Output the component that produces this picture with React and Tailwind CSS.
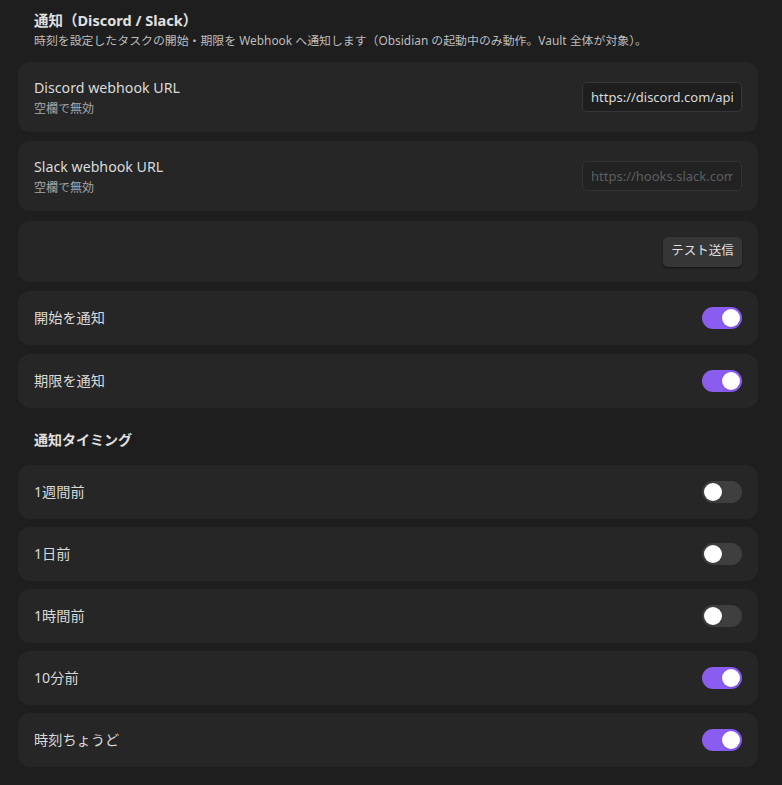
import React, { useState } from "react";

function Toggle({ on, onClick }) {
  return (
    <button
      onClick={onClick}
      className={`relative flex h-[22px] w-[40px] shrink-0 items-center rounded-full px-[2px] ${
        on ? "justify-end bg-[#8a5cf0]" : "justify-start bg-[#3f3f3f]"
      }`}
    >
      <span className="block h-[18px] w-[18px] rounded-full bg-white shadow" />
    </button>
  );
}

function Row({ title, desc, children, h = "h-[54px]" }) {
  return (
    <div className={`flex ${h} items-center justify-between rounded-[12px] bg-[#262626] px-4`}>
      <div className="flex flex-col">
        {title && <div className="text-[14.2px] leading-5 text-[#dadada]">{title}</div>}
        {desc && <div className="mt-[3px] text-[12px] leading-4 text-[#a8a8a8]">{desc}</div>}
      </div>
      {children}
    </div>
  );
}

export default function App() {
  const [flags, setFlags] = useState({
    start: true,
    due: true,
    week: false,
    day: false,
    hour: false,
    min10: true,
    exact: true,
  });
  const flip = (k) => setFlags((f) => ({ ...f, [k]: !f[k] }));

  const timings = [
    ["week", "1週間前"],
    ["day", "1日前"],
    ["hour", "1時間前"],
    ["min10", "10分前"],
    ["exact", "時刻ちょうど"],
  ];

  return (
    <div
      className="min-h-[785px] bg-[#1e1e1e] pl-[18px] pr-[24px] pt-[10px]"
      style={{ fontFamily: '"Noto Sans", "Noto Sans CJK JP", sans-serif' }}
    >
      <div className="px-4">
        <div className="text-[14.5px] font-bold leading-5 text-[#e0e0e0]">通知（Discord / Slack）</div>
        <div className="text-[11.9px] leading-5 text-[#bdbdbd]">
          時刻を設定したタスクの開始・期限を Webhook へ通知します（Obsidian の起動中のみ動作。Vault 全体が対象）。
        </div>
      </div>

      <div className="mt-[12px] flex flex-col gap-[9px]">
        <Row title="Discord webhook URL" desc="空欄で無効" h="h-[70px]">
          <input
            className="h-[30px] w-[160px] rounded-[5px] border border-[#363636] bg-[#1e1e1e] px-2 text-[13px] text-[#dadada] outline-none"
            defaultValue="https://discord.com/api/webhooks/"
          />
        </Row>
        <Row title="Slack webhook URL" desc="空欄で無効" h="h-[70px]">
          <input
            className="h-[30px] w-[160px] rounded-[5px] border border-[#333333] bg-[#222222] px-2 text-[13px] text-[#dadada] outline-none placeholder:text-[#5e5e5e]"
            placeholder="https://hooks.slack.com/services/"
          />
        </Row>
        <div className="mt-px">
          <Row h="h-[61px]">
            <button className="h-[30px] w-[79px] rounded-[5px] bg-[#363636] text-[12.5px] text-[#e0e0e0] shadow-[0_1px_2px_rgba(0,0,0,0.5)]">
              テスト送信
            </button>
          </Row>
        </div>
        <Row title="開始を通知">
          <Toggle on={flags.start} onClick={() => flip("start")} />
        </Row>
        <Row title="期限を通知">
          <Toggle on={flags.due} onClick={() => flip("due")} />
        </Row>
      </div>

      <div className="px-4 pb-[15px] pt-[22px] text-[14px] font-bold leading-5 text-[#e0e0e0]">通知タイミング</div>

      <div className="flex flex-col gap-[8px]">
        {timings.map(([k, label]) => (
          <Row key={k} title={label}>
            <Toggle on={flags[k]} onClick={() => flip(k)} />
          </Row>
        ))}
      </div>
    </div>
  );
}
